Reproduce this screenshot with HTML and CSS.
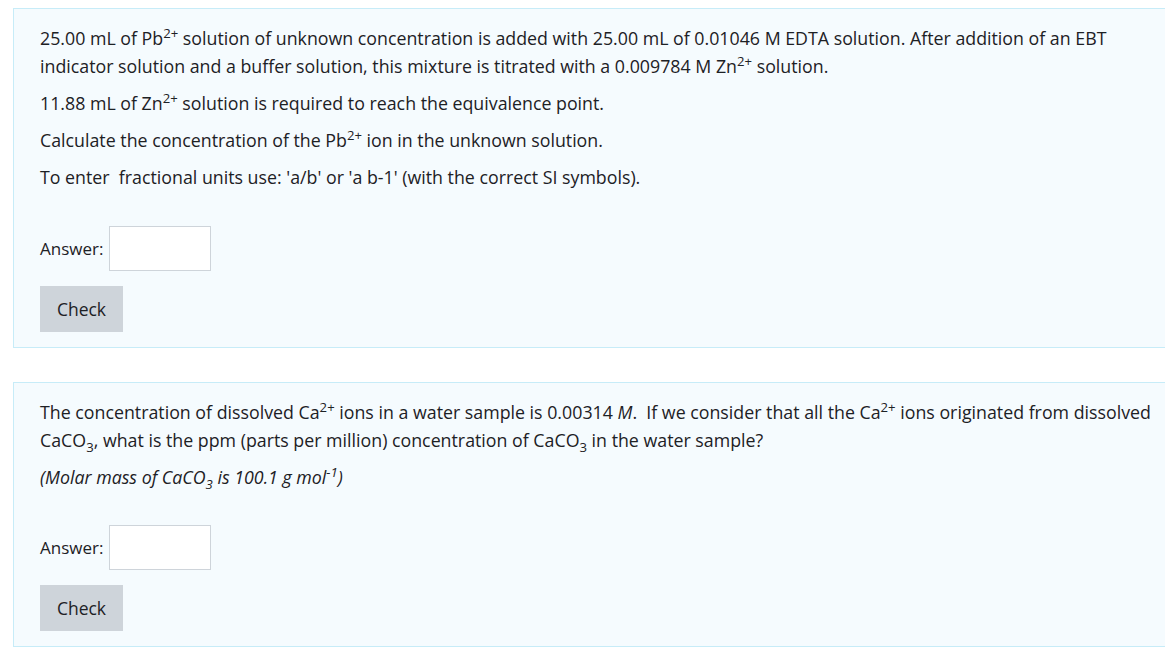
FILE: index.html
```html
<!DOCTYPE html>
<html>
<head>
<meta charset="utf-8">
<link rel="stylesheet" href="styles.css">
</head>
<body>
<div class="page">
  <div class="que">
    <p class="line">25.00 mL of Pb<sup>2+</sup> solution of unknown concentration is added with 25.00 mL of 0.01046 M EDTA solution. After addition of an EBT indicator solution and a buffer solution, this mixture is titrated with a 0.009784 M Zn<sup>2+</sup> solution.</p>
    <p class="line">11.88 mL of Zn<sup>2+</sup> solution is required to reach the equivalence point.</p>
    <p class="line">Calculate the concentration of the Pb<sup>2+</sup> ion in the unknown solution.</p>
    <p class="line">To enter&nbsp; fractional units use: 'a/b' or 'a b-1' (with the correct SI symbols).</p>
    <div class="answer"><label>Answer:</label><input class="field" type="text"></div>
    <button class="check">Check</button>
  </div>
  <div class="que q2">
    <p class="line">The concentration of dissolved Ca<sup>2+</sup> ions in a water sample is 0.00314 <i>M</i>.&nbsp; If we consider that all the Ca<sup>2+</sup> ions originated from dissolved CaCO<sub>3</sub>, what is the ppm (parts per million) concentration of CaCO<sub>3</sub> in the water sample?</p>
    <p class="line"><i>(Molar mass of CaCO<sub>3</sub> is 100.1 g mol<sup>-1</sup>)</i></p>
    <div class="answer"><label>Answer:</label><input class="field" type="text"></div>
    <button class="check">Check</button>
  </div>
</div>
</body>
</html>
```
FILE: styles.css
```css
html, body {
  margin: 0;
  padding: 0;
  background: #fff;
  overflow: hidden;
}
body {
  font-family: "Open Sans", "Noto Sans", sans-serif;
  font-size: 17.8px;
  color: #1d2125;
}
.page {
  padding: 8px 0 0 13px;
  width: 1180px;
}
.que {
  background: #f5fbfe;
  border: 1px solid #c7ecf8;
  padding: 15px 26px 15px 26px;
  margin-bottom: 34px;
}
.line {
  margin: 0 0 9px 0;
  line-height: 28px;
  max-width: 1122px;
}
sup, sub {
  font-size: 0.74em;
  line-height: 0;
}
.answer {
  display: flex;
  align-items: center;
  gap: 6px;
  margin-top: 35px;
  margin-bottom: 15px;
}
.q2 .answer {
  margin-top: 34px;
}
.answer label {
  font-size: 17px;
}
.field {
  width: 102px;
  height: 45px;
  box-sizing: border-box;
  border: 1px solid #ced4da;
  background: #fff;
  margin: 0;
}
.check {
  display: block;
  width: 83px;
  height: 46px;
  background: #ced4da;
  border: none;
  border-radius: 0;
  font-family: inherit;
  font-size: 17.5px;
  color: #1d2125;
  padding: 0;
  margin: 0;
}
```
